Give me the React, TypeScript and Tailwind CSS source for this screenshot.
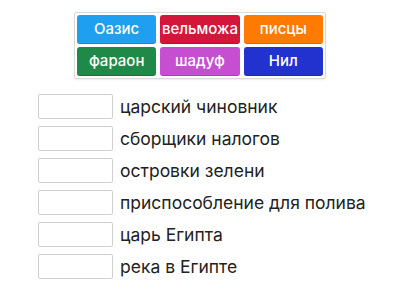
import React from "react";

const tiles = [
  { t: "Оазис", c: "bg-[#1e9ff0]" },
  { t: "вельможа", c: "bg-[#d3173a]" },
  { t: "писцы", c: "bg-[#ff7a00]" },
  { t: "фараон", c: "bg-[#1f8a47]" },
  { t: "шадуф", c: "bg-[#c54fd0]" },
  { t: "Нил", c: "bg-[#2132cf]" },
];

const rows = [
  "царский чиновник",
  "сборщики налогов",
  "островки зелени",
  "приспособление для полива",
  "царь Египта",
  "река в Египте",
];

export default function App() {
  return (
    <div className="w-[400px] h-[300px] bg-white overflow-hidden" style={{ fontFamily: "Inter, 'Noto Sans', sans-serif" }}>
      <div className="pt-[12px]">
        <div className="mx-auto w-[252px] border border-[#d9d9d9] rounded-[2px] p-[2px] grid grid-cols-3 gap-x-[4px] gap-y-[3px] shadow-[0_1px_2px_rgba(0,0,0,0.08)]">
          {tiles.map((x) => (
            <div
              key={x.t}
              className={`${x.c} h-[29px] rounded-[3px] flex items-center justify-center text-white text-[15px] font-medium shadow-[inset_0_-1px_0_rgba(0,0,0,0.15)]`}
            >
              {x.t}
            </div>
          ))}
        </div>
      </div>
      <div className="mt-[15px] pl-[38px] flex flex-col gap-[7px]">
        {rows.map((r) => (
          <div key={r} className="flex items-center h-[25px]">
            <div className="w-[75px] h-[25px] border border-[#cfcfcf] rounded-[2px] bg-white shrink-0" />
            <div className="ml-[7px] text-[17.5px] text-[#222] leading-none whitespace-nowrap">{r}</div>
          </div>
        ))}
      </div>
    </div>
  );
}
